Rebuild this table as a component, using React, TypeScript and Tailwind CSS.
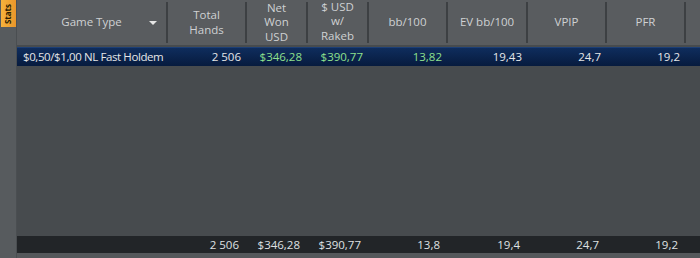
import React from "react";

const cols = "grid grid-cols-[151px_79px_61px_61px_79px_80px_79px_79px_1fr]";

function HeadCell({ children, extra }: { children?: React.ReactNode; extra?: React.ReactNode }) {
  return (
    <div className="flex h-full items-center">
      <div className="relative flex h-full flex-1 items-center justify-center text-center leading-[14.5px]">
        {children}
        {extra}
      </div>
      <div className="h-[41px] w-[2px] bg-[#3d4043]" />
    </div>
  );
}

export default function App() {
  const green = "text-[#8ee08e]";
  const row = ["2 506", "$346,28", "$390,77", "13,82", "19,43", "24,7", "19,2"];
  const foot = ["2 506", "$346,28", "$390,77", "13,8", "19,4", "24,7", "19,2"];
  return (
    <div
      className="flex h-[258px] w-[700px] overflow-hidden whitespace-nowrap text-[11.5px]"
      style={{ fontFamily: '"Open Sans", "Noto Sans", sans-serif' }}
    >
      <div className="flex w-[17px] flex-col border-r border-[#4a4e51] bg-[#575b5e]">
        <div className="ml-px flex h-[27px] w-[15px] items-center justify-center bg-gradient-to-r from-[#f7b23c] to-[#e9962a]">
          <span className="rotate-[-90deg] text-[8px] font-bold leading-none text-[#2a1c00]">Stats</span>
        </div>
      </div>
      <div className="flex flex-1 flex-col bg-[#474b4e]">
        <div className={`${cols} h-[45px] bg-[#595c5f] text-[#cfd1d3]`}>
          <HeadCell
            extra={
              <span className="absolute right-[9px] top-[21px] h-0 w-0 border-x-[4px] border-t-[4px] border-x-transparent border-t-[#e6e6e6]" />
            }
          >
            Game Type
          </HeadCell>
          <HeadCell>
            <div>
              Total
              <br />
              Hands
            </div>
          </HeadCell>
          <HeadCell>
            <div>
              Net
              <br />
              Won
              <br />
              USD
            </div>
          </HeadCell>
          <HeadCell>
            <div className="-mt-[2px]">
              $ USD
              <br />
              w/
              <br />
              Rakeb
            </div>
          </HeadCell>
          <HeadCell>bb/100</HeadCell>
          <HeadCell>EV bb/100</HeadCell>
          <HeadCell>VPIP</HeadCell>
          <HeadCell>PFR</HeadCell>
          <div />
        </div>
        <div
          className={`${cols} mt-[2px] h-[19px] items-center border-t border-[#1d3f75] bg-gradient-to-b from-[#0f2d5d] to-[#071b3e] text-[#e4e6e8]`}
        >
          <div className="pl-[6px] tracking-[-0.4px]">$0,50/$1,00 NL Fast Holdem</div>
          {row.map((v, i) => (
            <div
              key={i}
              className={`pr-[6px] text-right ${i >= 1 && i <= 3 ? green : ""}`}
            >
              {v}
            </div>
          ))}
          <div />
        </div>
        <div className="flex-1" />
        <div className={`${cols} h-[17px] items-center bg-[#222528] text-[#dfe1e3]`}>
          <div />
          {foot.map((v, i) => (
            <div key={i} className="pr-[8px] text-right">
              {v}
            </div>
          ))}
          <div />
        </div>
        <div className="h-[5px] bg-[#55585b]" />
      </div>
    </div>
  );
}
